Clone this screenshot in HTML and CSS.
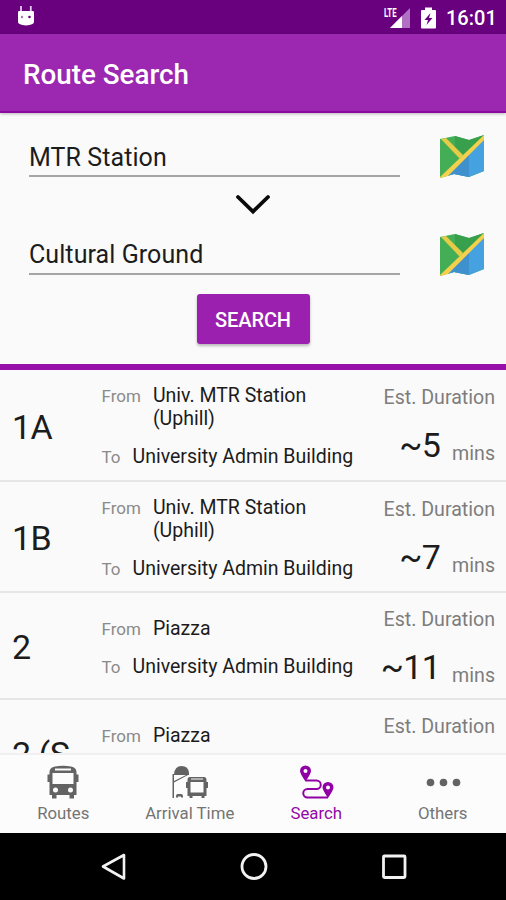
FILE: index.html
```html
<!DOCTYPE html>
<html lang="en">
<head>
<meta charset="utf-8">
<title>Route Search</title>
<link rel="stylesheet" href="styles.css">
</head>
<body>
<div class="screen">
  <div class="status">
    <svg class="droid" width="18" height="22" viewBox="0 0 18 22"><path d="M4 1v6M13.800 1v6" stroke="#e6c8f2" stroke-width="1.800"/><path d="M1 7Q1 6 2.500 6H15.500Q17 6 17 7V17Q17 19.500 9 20.500Q1 19.500 1 17Z" fill="#fff"/><circle cx="5" cy="12" r="1.200" fill="#a77bb6"/><circle cx="12.500" cy="12" r="1.300" fill="#6a007c"/></svg>
    <div class="signal">
      <span class="lte">LTE</span>
      <svg width="20" height="20" viewBox="0 0 20 20"><path d="M20 0V20H0Z" fill="#b070c4"/><path d="M12 8V20H0Z" fill="#fff"/></svg>
    </div>
    <svg class="battery" width="15" height="22" viewBox="0 0 15 22"><path d="M4 .5H11V3H14Q15 3 15 4V20.500Q15 21.500 14 21.500H1Q0 21.500 0 20.500V4Q0 3 1 3H4Z" fill="#fff"/><path d="M9.500 6 3.500 13H7L5.500 18 11.500 11H8Z" fill="#69007d"/></svg>
    <span class="clock">16:01</span>
  </div>
  <header class="appbar"><h1>Route Search</h1></header>

  <form class="form">
    <div class="field-row">
      <div class="field first">MTR Station</div>
      <svg class="map" width="46" height="46" viewBox="0 0 46 46"><path d="M1 4 16 1 30 5 45 0V36L30 42 15 39 1 43Z" fill="#43ae55"/><path d="M16 1 30 5 45 0 23 24 16 17Z" fill="#38a04c"/><path d="M45 4V36L30 42 15 39 8 41Z" fill="#45a1df"/><path d="M30 19V42L15 39 8 41Z" fill="#3e91cd"/><path d="M1 43V42L45 0V5L9 41Z" fill="#f4d04b"/><path d="M2 4 7 3 24 20 21 24Z" fill="#e6cb46"/></svg>
    </div>
    <svg class="chevron" width="36" height="22" viewBox="0 0 36 22"><path d="M3 3 18 17.500 33 3" fill="none" stroke="#0a0a0a" stroke-width="3.800" stroke-linecap="round"/></svg>
    <div class="field-row">
      <div class="field">Cultural Ground</div>
      <svg class="map" width="46" height="46" viewBox="0 0 46 46"><path d="M1 4 16 1 30 5 45 0V36L30 42 15 39 1 43Z" fill="#43ae55"/><path d="M16 1 30 5 45 0 23 24 16 17Z" fill="#38a04c"/><path d="M45 4V36L30 42 15 39 8 41Z" fill="#45a1df"/><path d="M30 19V42L15 39 8 41Z" fill="#3e91cd"/><path d="M1 43V42L45 0V5L9 41Z" fill="#f4d04b"/><path d="M2 4 7 3 24 20 21 24Z" fill="#e6cb46"/></svg>
    </div>
    <button class="search" type="button">SEARCH</button>
  </form>

  <main class="list">
    <article class="row">
      <div class="code">1A</div>
      <div class="stops">
        <div class="stop"><span class="tag">From</span><span class="name">Univ. MTR Station<br>(Uphill)</span></div>
        <div class="stop"><span class="tag">To</span><span class="name">University Admin Building</span></div>
      </div>
      <div class="duration"><div class="est">Est. Duration</div><div class="time"><span class="num">~5</span><span class="unit">mins</span></div></div>
    </article>
    <article class="row">
      <div class="code">1B</div>
      <div class="stops">
        <div class="stop"><span class="tag">From</span><span class="name">Univ. MTR Station<br>(Uphill)</span></div>
        <div class="stop"><span class="tag">To</span><span class="name">University Admin Building</span></div>
      </div>
      <div class="duration"><div class="est">Est. Duration</div><div class="time"><span class="num">~7</span><span class="unit">mins</span></div></div>
    </article>
    <article class="row short">
      <div class="code">2</div>
      <div class="stops">
        <div class="stop"><span class="tag">From</span><span class="name">Piazza</span></div>
        <div class="stop"><span class="tag">To</span><span class="name">University Admin Building</span></div>
      </div>
      <div class="duration"><div class="est">Est. Duration</div><div class="time"><span class="num">~11</span><span class="unit">mins</span></div></div>
    </article>
    <article class="row short">
      <div class="code">2 (S</div>
      <div class="stops">
        <div class="stop"><span class="tag">From</span><span class="name">Piazza</span></div>
      </div>
      <div class="duration"><div class="est">Est. Duration</div></div>
    </article>
  </main>

  <nav class="tabs">
    <a class="tab">
      <svg width="36" height="36" viewBox="0 0 36 36"><path fill="#636363" fill-rule="evenodd" d="M10 1.500Q18 0 26 1.500Q31.500 2.500 31.500 7V9.500H33.500V17H31.500V30H29V33.500H24.500V30H11.500V33.500H7V30H4.500V17H2.500V9.500H4.500V7Q4.500 2.500 10 1.500ZM10 3.500V5.500H26V3.500ZM7.500 8V19H28.500V8ZM10.500 22.500A2.500 2.500 0 1 0 10.500 27.500A2.500 2.500 0 1 0 10.500 22.500ZM25.500 22.500A2.500 2.500 0 1 0 25.500 27.500A2.500 2.500 0 1 0 25.500 22.500Z"/></svg>
      <span>Routes</span>
    </a>
    <a class="tab">
      <svg width="36" height="36" viewBox="0 0 36 36"><g fill="#636363"><path d="M2 9.500Q2.500 1 9.500 1Q16.500 1 17 8V10H2Z"/><path fill-rule="evenodd" d="M.5 9H2V16L15 9.500H17L2 17.500V33H.5Z"/><path d="M4 32.500V31Q4 29 6 29H9Q11 29 11 31V32.500H9V31.500H6V32.500Z"/><path fill-rule="evenodd" d="M18 12H32Q34.500 12 34.500 15V17H36V23H34.500V31H32.500V33H29.500V31H20.500V33H17.500V31H15.500V23H14V17H15.500V15Q15.500 12 18 12ZM19 13.500V14.500H31V13.500ZM18.500 17V27.500H31.500V17Z"/></g></svg>
      <span>Arrival Time</span>
    </a>
    <a class="tab active">
      <svg width="36" height="36" viewBox="0 0 36 36"><g fill="#9000a5"><path fill-rule="evenodd" d="M7.500 .5A5.500 5.500 0 0 1 13 6Q13 8.500 7.500 16.500Q2 8.500 2 6A5.500 5.500 0 0 1 7.500 .5ZM7.500 4A2 2 0 1 0 7.500 8A2 2 0 1 0 7.500 4Z"/><path fill-rule="evenodd" d="M30 17A5.500 5.500 0 0 1 35.500 22.500Q35.500 25 30 33Q24.500 25 24.500 22.500A5.500 5.500 0 0 1 30 17ZM30 20.500A2 2 0 1 0 30 24.500A2 2 0 1 0 30 20.500Z"/></g><path d="M7.500 15.500H18.500A4 4 0 0 1 18.500 24H9.500A4 4 0 0 0 9.500 32.500H30" fill="none" stroke="#9000a5" stroke-width="2"/></svg>
      <span>Search</span>
    </a>
    <a class="tab">
      <svg width="36" height="36" viewBox="0 0 36 36"><g fill="#636363"><circle cx="5.500" cy="17.500" r="3.800"/><circle cx="18.500" cy="17.500" r="3.800"/><circle cx="31.500" cy="17.500" r="3.800"/></g></svg>
      <span>Others</span>
    </a>
  </nav>

  <div class="system">
    <svg width="28" height="30" viewBox="0 0 28 30"><path d="M3 14.500 24 3V26.500Z" fill="none" stroke="#f2f2f2" stroke-width="2.600" stroke-linejoin="round"/></svg>
    <svg width="28" height="30" viewBox="0 0 28 30"><circle cx="14" cy="14.500" r="12" fill="none" stroke="#f2f2f2" stroke-width="2.800"/></svg>
    <svg width="28" height="30" viewBox="0 0 28 30"><rect x="3.500" y="4" width="21.500" height="21.500" rx="1" fill="none" stroke="#f2f2f2" stroke-width="2.800"/></svg>
  </div>
</div>
</body>
</html>
```
FILE: styles.css
```css
* { box-sizing: border-box; }
body { margin: 0; background: #fafafa; font-family: Roboto, sans-serif; color: #1c1c1c; }
.screen { width: 506px; height: 900px; display: flex; flex-direction: column; overflow: hidden; }
svg { display: block; flex: none; }

.status { flex: none; height: 34px; background: #69007d; display: flex; align-items: flex-start; padding: 5px 0 0 17px; }
.signal { margin-left: auto; display: flex; width: 26px; padding-top: 3px; }
.lte { font-size: 12.500px; line-height: 9px; font-weight: 700; color: #fff; width: 6px; white-space: nowrap; transform: scaleX(.62); transform-origin: left; }
.status .battery { margin: 2px 0 0 11px; }
.clock { color: #fff; font-size: 20px; font-weight: 500; line-height: 26px; width: 48px; margin: 0 12px 0 10px; white-space: nowrap; }

.appbar { flex: none; height: 79px; background: #9c27b0; border-bottom: 2px solid #8d0aa1; display: flex; align-items: center; padding: 4px 0 0 23px; box-shadow: 0 1px 3px #0004; }
h1 { margin: 0; color: #fff; font-size: 27.800px; font-weight: 500; line-height: 32px; }

.form { flex: none; height: 257px; border-bottom: 6px solid #9710aa; display: flex; flex-direction: column; align-items: center; padding-top: 18px; }
.field-row { width: 100%; height: 50px; display: flex; padding: 0 21px 0 29px; justify-content: space-between; align-items: flex-start; }
.field { width: 371px; height: 46px; border-bottom: 2px solid #a5a5a5; font-size: 25px; line-height: 52px; letter-spacing: .08px; }
.field.first { line-height: 54px; }
.map { margin-top: 4px; }
.chevron { margin: 13px 0 13px; }
.search { margin-top: 15px; width: 113px; height: 50px; border: 0; border-radius: 3px; background: #9c20b0; color: #fff; font: 500 20px/50px Roboto, sans-serif; letter-spacing: -.1px; padding: 1px 0 0; box-shadow: 0 2px 3px #0004; }

.list { flex: none; height: 383px; overflow: hidden; padding-top: 1px; }
.row { height: 111px; display: grid; grid-template-columns: 101.500px 1fr 126px; border-bottom: 2px solid #e6e6e6; }
.code { font-size: 34px; line-height: 40px; padding: 36px 0 0 12px; white-space: nowrap; letter-spacing: -.5px; }
.row:first-child .stops { padding-top: 13px; }
.stops { padding-top: 14px; display: flex; flex-direction: column; gap: 15px; white-space: nowrap; }
.stop { display: flex; gap: 12px; align-items: baseline; }
.tag { font-size: 17px; color: #8a8a8a; line-height: 23px; }
.name { font-size: 19.500px; line-height: 23px; }
.duration { padding: 16px 11px 0 0; text-align: right; white-space: nowrap; }
.row:first-child .duration { padding-top: 15px; }
.est, .unit { font-size: 19.600px; line-height: 23px; color: #7d7d7d; }
.time { display: flex; justify-content: flex-end; align-items: flex-start; gap: 12px; margin-top: 16px; }
.num { font-size: 34px; line-height: 40px; letter-spacing: -.7px; }
.unit { line-height: 58px; }
.row.short { height: 107px; }
.row.short .duration { padding-top: 15px; }
.row.short .stops { padding-top: 24px; gap: 14px; }
.row.short .code { padding-top: 34px; }

.tabs { flex: none; height: 80px; background: #fcfcfc; border-top: 2px solid #f0f0f0; display: flex; padding-bottom: 1px; }
.tab { flex: 1; display: flex; flex-direction: column; align-items: center; padding-top: 10px; font-size: 16.800px; line-height: 24px; color: #747474; white-space: nowrap; }
.tab.active { color: #9208a6; }
.system { flex: none; height: 67px; background: #000; display: flex; justify-content: space-between; align-items: flex-start; padding: 19px 98px 0 100px; }
```
